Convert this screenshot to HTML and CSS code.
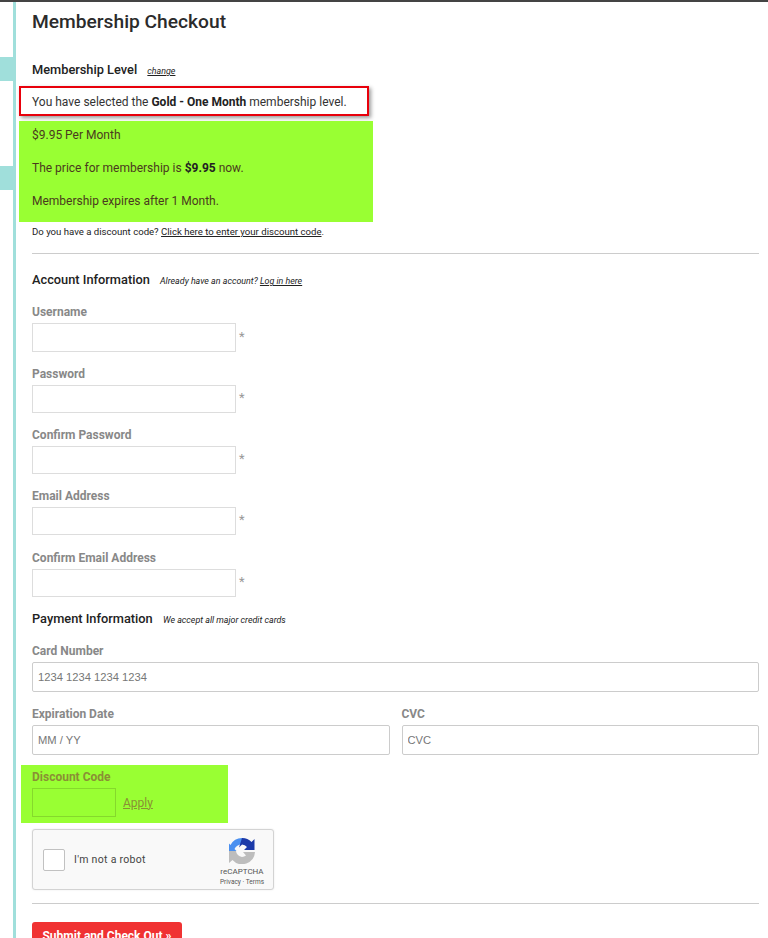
FILE: index.html
```html
<!DOCTYPE html>
<html lang="en">
<head>
  <meta charset="UTF-8" />
  <meta name="viewport" content="width=device-width, initial-scale=1.0"/>
  <title>Membership Checkout</title>
  <link rel="stylesheet" href="styles.css">
</head>
<body>
  <div class="page">
    <div class="side">
      <div class="side-tab"></div>
      <div class="side-tab second"></div>
    </div>
    <div class="main">
      <h1>Membership Checkout</h1>

      <h2 class="level-title">Membership Level <a href="#" class="small-note">change</a></h2>
      <div class="selected-box">You have selected the <strong>Gold - One Month</strong> membership level.</div>
      <div class="price-box">
        <p>$9.95 Per Month</p>
        <p>The price for membership is <strong>$9.95</strong> now.</p>
        <p>Membership expires after 1 Month.</p>
      </div>
      <p class="discount-note">Do you have a discount code? <a href="#">Click here to enter your discount code</a>.</p>
      <hr>

      <h2 class="account-title">Account Information <span class="small-note">Already have an account? <a href="#">Log in here</a></span></h2>
      <div class="field">
        <label>Username</label>
        <div class="input-row"><input type="text" class="text-input tall"><span class="req">*</span></div>
      </div>
      <div class="field">
        <label>Password</label>
        <div class="input-row"><input type="password" class="text-input"><span class="req">*</span></div>
      </div>
      <div class="field">
        <label>Confirm Password</label>
        <div class="input-row"><input type="password" class="text-input"><span class="req">*</span></div>
      </div>
      <div class="field">
        <label>Email Address</label>
        <div class="input-row"><input type="text" class="text-input"><span class="req">*</span></div>
      </div>
      <div class="field loose">
        <label>Confirm Email Address</label>
        <div class="input-row"><input type="text" class="text-input"><span class="req">*</span></div>
      </div>

      <h2 class="payment-title">Payment Information <span class="small-note">We accept all major credit cards</span></h2>
      <div class="card-field">
        <label>Card Number</label>
        <input type="text" class="card-input" placeholder="1234 1234 1234 1234">
      </div>
      <div class="card-row">
        <div>
          <label>Expiration Date</label>
          <input type="text" class="card-input" placeholder="MM / YY">
        </div>
        <div>
          <label>CVC</label>
          <input type="text" class="card-input" placeholder="CVC">
        </div>
      </div>

      <div class="discount-box">
        <label>Discount Code</label>
        <div class="discount-row">
          <input type="text" class="discount-input">
          <a href="#">Apply</a>
        </div>
      </div>

      <div class="captcha">
        <span class="captcha-check"></span>
        <span class="captcha-text">I'm not a robot</span>
        <div class="captcha-logo">
          <svg width="26" height="26" viewBox="0 0 26 26">
            <path d="M13 0 A13 13 0 0 0 1.500 7 L0 5.500 V13 H7.500 L5.500 11 A8 8 0 0 1 13 6.500 Z" fill="#4a90f0"/>
            <path d="M13 0 A13 13 0 0 1 22.500 4 L25.500 1 V12 H15 L18 9 A7.500 7.500 0 0 0 13 6.500 L10 9.500 Z" fill="#1c3aa9"/>
            <path d="M0 13 H7 A6.500 6.500 0 0 0 13 19 A6.500 6.500 0 0 0 17 17.500 L14 14 H26 A13 13 0 0 1 3.500 22 L0 25 Z" fill="#bdbdbd"/>
          </svg>
          <span class="captcha-brand">reCAPTCHA</span>
          <span class="captcha-links">Privacy · Terms</span>
        </div>
      </div>
      <hr class="bottom-line">
      <button class="submit-button">Submit and Check Out »</button>
    </div>
  </div>
</body>
</html>
```
FILE: styles.css
```css
html, body {
  height: 100%;
}
body {
  font-family: Roboto, Arial, sans-serif;
  margin: 0;
  padding: 0;
  background-color: #fff;
  color: #222;
  font-size: 12px;
  overflow: hidden;
}
.page {
  display: flex;
  height: 938px;
  border-top: 2px solid #444;
  box-sizing: border-box;
}
.side {
  width: 13px;
  flex-shrink: 0;
  border-right: 3px solid #a0dfdb;
}
.side-tab {
  height: 24px;
  margin-top: 55px;
  background-color: #a0dfdb;
}
.side-tab.second {
  margin-top: 85px;
}
.main {
  flex: 1;
  padding: 0 9px 0 16px;
  min-width: 0;
}
h1 {
  font-size: 19.200px;
  font-weight: 500;
  line-height: 24px;
  margin: 8px 0 0 0;
  color: #2b2b2b;
}
h2 {
  font-size: 12.800px;
  font-weight: 500;
  line-height: 18px;
  margin: 0;
  color: #222;
}
.level-title {
  margin-top: 27px;
}
.small-note {
  font-size: 8.900px;
  font-style: italic;
  font-weight: 400;
  color: #222;
  margin-left: 7px;
}
.small-note a, a.small-note {
  color: #222;
}
.selected-box {
  width: 350px;
  height: 30px;
  box-sizing: border-box;
  margin: 6px 0 0 -13px;
  padding-left: 11px;
  line-height: 29px;
  border: 2px solid #e8000b;
  box-shadow: 2px 2px 4px rgba(0, 0, 0, 0.4);
  color: #333;
}
.selected-box strong, .price-box strong {
  color: #222;
}
.price-box {
  width: 354px;
  height: 101px;
  box-sizing: border-box;
  margin: 5px 0 0 -13px;
  padding: 7px 0 0 13px;
  background-color: #99ff33;
  color: #4a3a1e;
}
.price-box p {
  margin: 0 0 19px 0;
  line-height: 14px;
}
.discount-note {
  font-size: 9.600px;
  line-height: 14px;
  margin: 3px 0 0 0;
}
.discount-note a {
  color: #222;
}
hr {
  border: none;
  border-top: 1px solid #ccc;
  margin: 14px 0 0 0;
}
.account-title {
  margin-top: 17px;
}
label {
  display: block;
  font-weight: 700;
  color: #888;
  line-height: 14px;
}
.field {
  margin-top: 15px;
}
.field.loose {
  margin-top: 16px;
}
.input-row {
  display: flex;
  align-items: center;
  margin-top: 4px;
}
.text-input {
  width: 204px;
  height: 28px;
  box-sizing: border-box;
  border: 1px solid #ddd;
  background-color: #fff;
  padding: 0;
  outline: none;
}
.text-input.tall {
  height: 29px;
}
.req {
  margin: 0 0 2px 3px;
  color: #999;
  font-size: 13px;
  line-height: 14px;
}
.payment-title {
  margin-top: 13px;
}
.card-field {
  margin-top: 15px;
}
.card-input {
  display: block;
  width: 100%;
  height: 30px;
  margin-top: 4px;
  box-sizing: border-box;
  border: 1px solid #ccc;
  border-radius: 2px;
  padding: 0 5px;
  font-family: "Liberation Sans", Arial, sans-serif;
  font-size: 11.200px;
  outline: none;
}
.card-input::placeholder {
  color: #777;
}
.card-row {
  display: grid;
  grid-template-columns: 1fr 1fr;
  gap: 12px;
  margin-top: 15px;
}
.discount-box {
  width: 207px;
  height: 58px;
  box-sizing: border-box;
  margin: 10px 0 0 -11px;
  padding: 5px 0 0 11px;
  background-color: #99ff33;
}
.discount-box label {
  color: #8a8f35;
}
.discount-row {
  display: flex;
  align-items: center;
  gap: 7px;
  margin-top: 4px;
}
.discount-input {
  width: 84px;
  height: 29px;
  box-sizing: border-box;
  border: 1px solid #85d92c;
  background: transparent;
  padding: 0;
  outline: none;
}
.discount-row a {
  color: #8a8f35;
}
.captcha {
  display: flex;
  align-items: center;
  position: relative;
  width: 242px;
  height: 61px;
  box-sizing: border-box;
  margin-top: 6px;
  border: 1px solid #d3d3d3;
  border-radius: 3px;
  background-color: #f9f9f9;
  box-shadow: 0 0 2px rgba(0, 0, 0, 0.1);
}
.captcha-check {
  width: 20px;
  height: 20px;
  margin-left: 10px;
  border: 1px solid #c1c1c1;
  border-radius: 2px;
  background-color: #fff;
}
.captcha-text {
  margin-left: 9px;
  font-size: 10.500px;
  letter-spacing: 0.3px;
  color: #444;
}
.captcha-logo {
  position: absolute;
  right: 9px;
  top: 8px;
  display: flex;
  flex-direction: column;
  align-items: center;
  color: #555;
}
.captcha-brand {
  font-size: 8px;
  line-height: 10px;
  margin-top: 3px;
}
.captcha-links {
  font-size: 6.500px;
  line-height: 9px;
  margin-top: 1px;
  white-space: nowrap;
}
.bottom-line {
  margin-top: 13px;
}
.submit-button {
  display: block;
  margin-top: 18px;
  width: 150px;
  border: none;
  border-radius: 3px;
  background-color: #f03232;
  color: #fff;
  font-family: Roboto, Arial, sans-serif;
  font-size: 12px;
  line-height: 14px;
  font-weight: 700;
  padding: 7px 10px 6px;
}
```
